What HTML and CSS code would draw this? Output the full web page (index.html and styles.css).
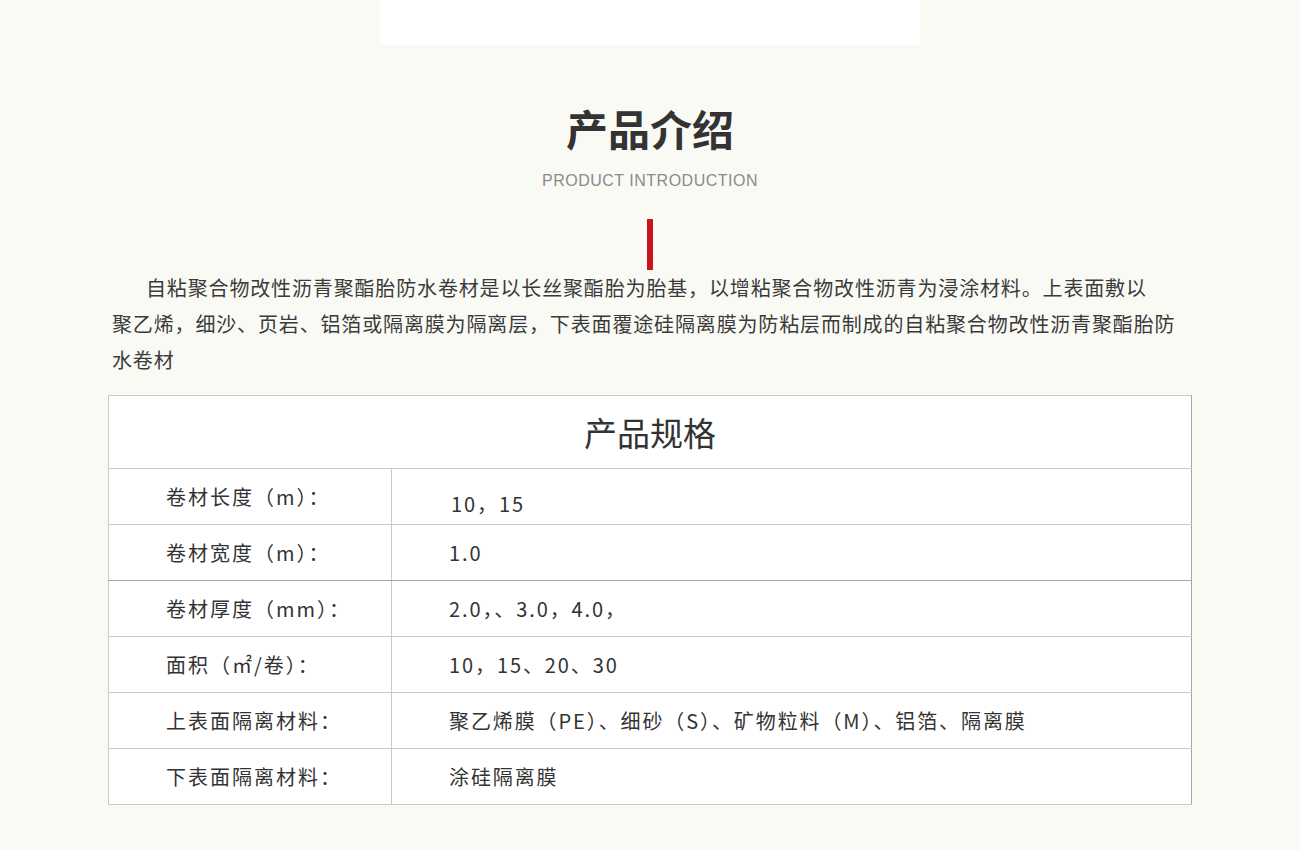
FILE: index.html
```html
<!DOCTYPE html>
<html lang="zh-CN">
<head>
<meta charset="utf-8">
<title>产品介绍</title>
<link rel="stylesheet" href="styles.css">
</head>
<body>
<div class="page">
  <div class="top-box"></div>
  <h1 class="title">产品介绍</h1>
  <div class="subtitle">PRODUCT INTRODUCTION</div>
  <div class="red-bar"></div>
  <p class="intro">自粘聚合物改性沥青聚酯胎防水卷材是以长丝聚酯胎为胎基，以增粘聚合物改性沥青为浸涂材料。上表面敷以<br>聚乙烯，细沙、页岩、铝箔或隔离膜为隔离层，下表面覆途硅隔离膜为防粘层而制成的自粘聚合物改性沥青聚酯胎防水卷材</p>
  <table class="spec">
    <tr><th class="spec-head" colspan="2">产品规格</th></tr>
    <tr><td class="label">卷材长度（m）：</td><td class="value value-low">10，15</td></tr>
    <tr class="dark"><td class="label">卷材宽度（m）：</td><td class="value">1.0</td></tr>
    <tr><td class="label">卷材厚度（mm）：</td><td class="value">2.0，、3.0，4.0，</td></tr>
    <tr><td class="label">面积（㎡/卷）：</td><td class="value">10，15、20、30</td></tr>
    <tr><td class="label">上表面隔离材料：</td><td class="value">聚乙烯膜（PE）、细砂（S）、矿物粒料（M）、铝箔、隔离膜</td></tr>
    <tr><td class="label">下表面隔离材料：</td><td class="value">涂硅隔离膜</td></tr>
  </table>
</div>
</body>
</html>
```

FILE: styles.css
```css
html, body {
  margin: 0;
  padding: 0;
  background: #fafaf5;
}
body {
  font-family: "Noto Sans CJK SC", "Noto Sans", sans-serif;
  color: #333;
}
.page {
  width: 1300px;
  display: flex;
  flex-direction: column;
  align-items: center;
}
.top-box {
  width: 540px;
  height: 45px;
  background: #ffffff;
}
.title {
  margin: 62px 0 0;
  font-size: 42px;
  line-height: 42px;
  font-weight: 700;
  color: #333;
}
.subtitle {
  margin-top: 24px;
  font-family: "Liberation Sans", Arial, sans-serif;
  font-size: 16px;
  line-height: 16px;
  color: #8a8a8a;
  letter-spacing: 0.5px;
}
.red-bar {
  margin-top: 30px;
  width: 6px;
  height: 51px;
  background: #c8141c;
}
.intro {
  align-self: flex-start;
  margin: 0 0 17px 112px;
  width: 1080px;
  font-size: 20px;
  line-height: 36px;
  letter-spacing: 0.85px;
  text-indent: 34px;
  color: #3a3a3a;
}
.spec {
  width: 1084px;
  border-collapse: collapse;
  background: #ffffff;
  border: 1px solid #c9c9c9;
  font-size: 20px;
  color: #333;
}
.spec th, .spec td {
  border: 1px solid #c9c9c9;
  padding: 0;
}
.spec tr > *:last-child {
  border-right-color: #a8a8a8;
}
.spec-head {
  height: 72px;
  font-size: 33px;
  font-weight: 400;
  text-align: center;
  vertical-align: middle;
}
.label {
  width: 225px;
  height: 55px;
  padding-left: 57px !important;
  vertical-align: middle;
  letter-spacing: 2px;
}
.value {
  padding-left: 57px !important;
  vertical-align: middle;
  letter-spacing: 1.9px;
}
.value-low {
  padding-top: 14px !important;
  padding-left: 59px !important;
}
.spec tr.dark td {
  border-bottom-color: #a6a6a6;
}
```
